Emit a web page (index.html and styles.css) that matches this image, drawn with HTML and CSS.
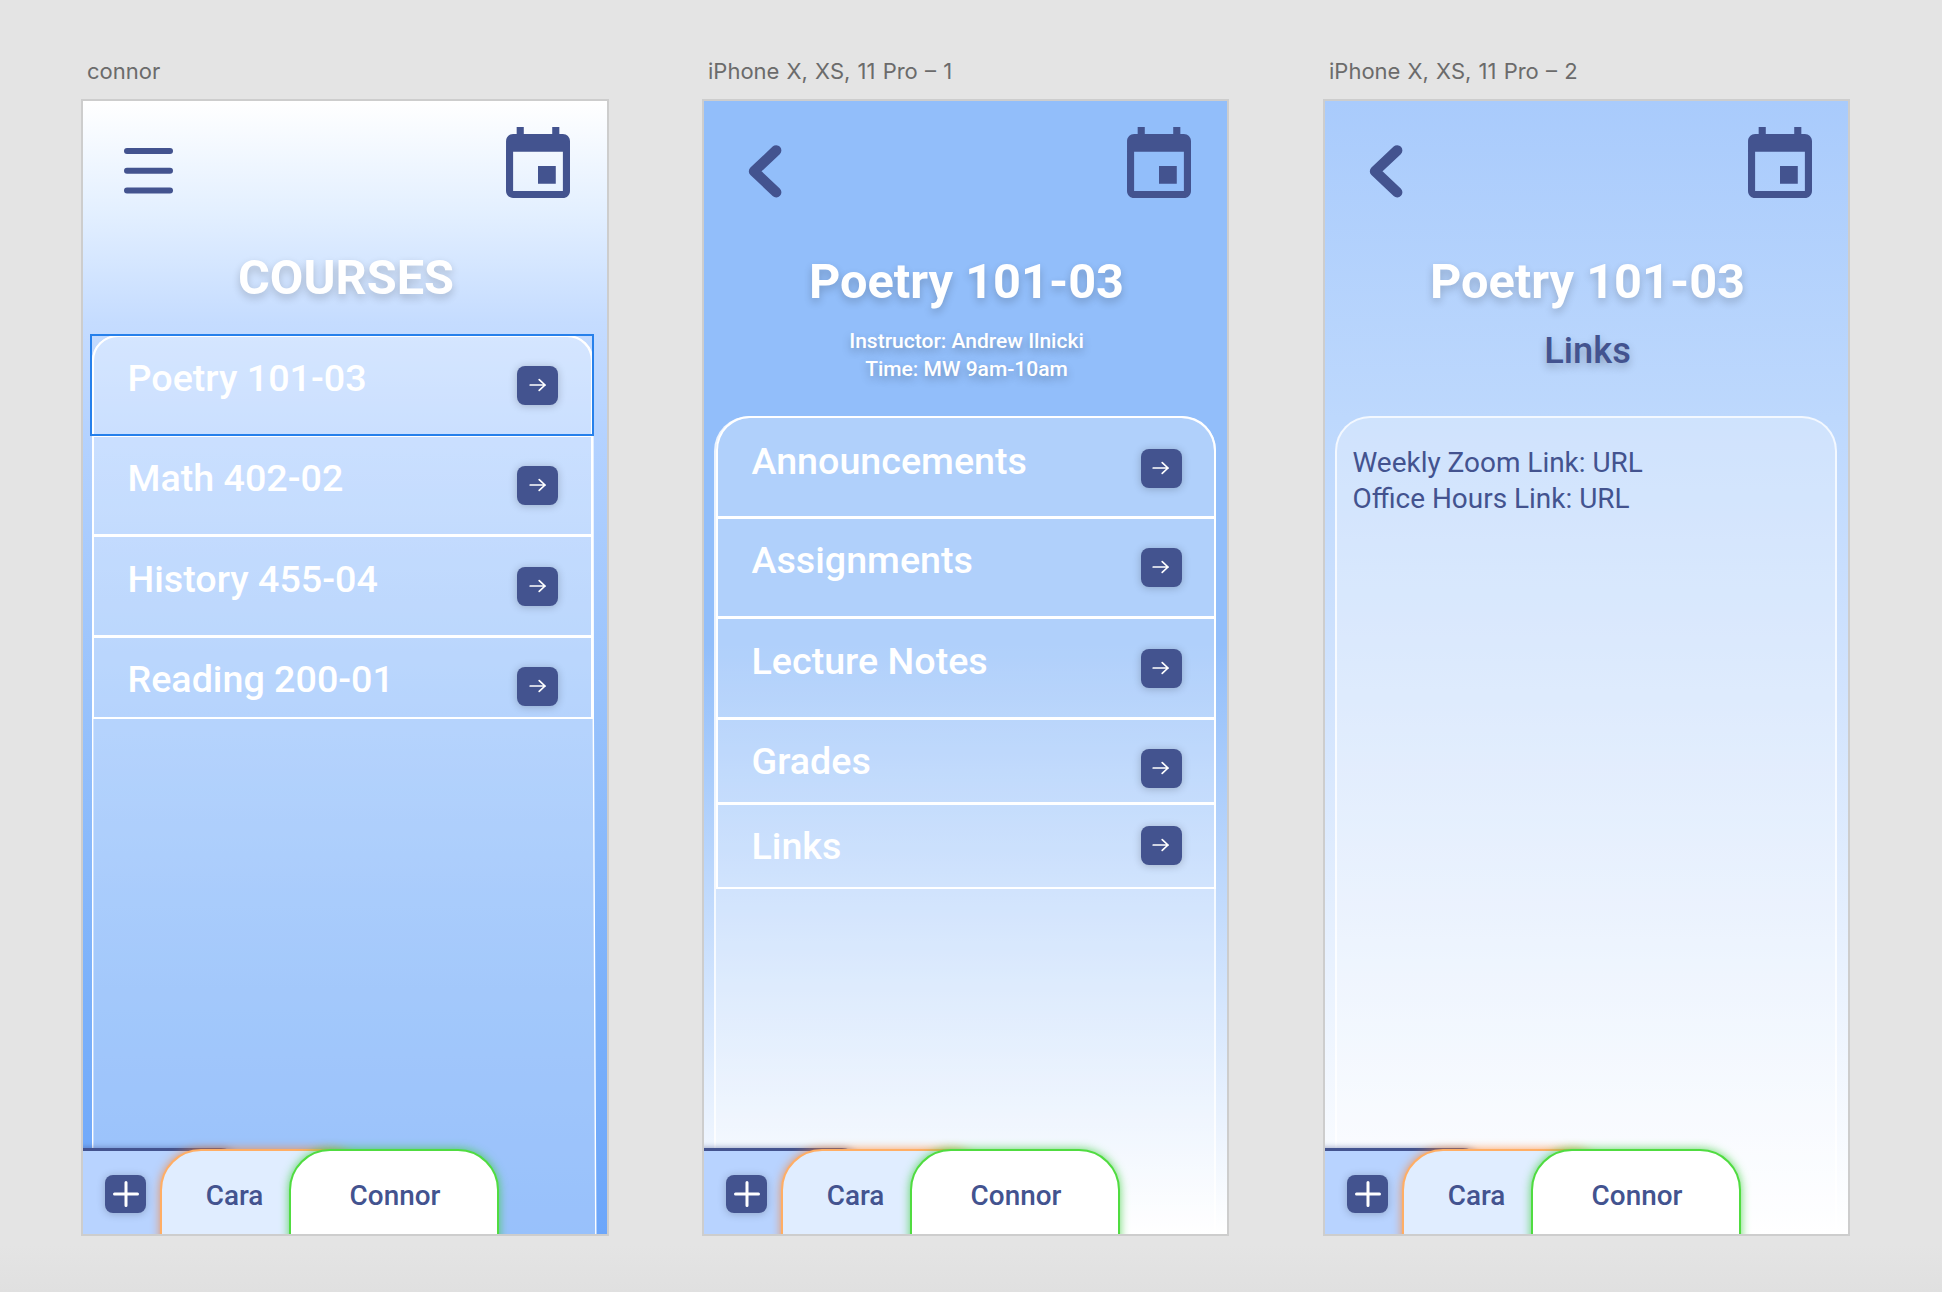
FILE: index.html
```html
<!DOCTYPE html>
<html lang="en">
<head>
<meta charset="utf-8">
<title>Course app artboards</title>
<link rel="stylesheet" href="styles.css">
</head>
<body>
<svg class="defs" aria-hidden="true">
  <symbol id="calendar" viewBox="3 1 18 20" preserveAspectRatio="none"><path fill="#43538f" d="M17 12h-5v5h5v-5zM16 1v2H8V1H6v2H5c-1.11 0-1.99.9-1.99 2L3 19c0 1.1.89 2 2 2h14c1.1 0 2-.9 2-2V5c0-1.1-.9-2-2-2h-1V1h-2zm3 18H5V8h14v11z"/></symbol>
  <symbol id="menu" viewBox="0 0 50 46"><g fill="#43538f"><rect width="49" height="6" y="0.1" rx="3"/><rect width="49" height="6" y="19.8" rx="3"/><rect width="49" height="6" y="39.4" rx="3"/></g></symbol>
  <symbol id="back" viewBox="0 0 34 53"><path d="M28.2 5.4 6 26.3l22.2 20.9" fill="none" stroke="#43538f" stroke-width="10.4" stroke-linecap="round" stroke-linejoin="round"/></symbol>
  <symbol id="arrow" viewBox="0 0 18 14"><path d="M1.2 7h15M10.2 1.6 16 7l-5.800 5.400" fill="none" stroke="#fff" stroke-width="1.700" stroke-linecap="round" stroke-linejoin="round"/></symbol>
  <symbol id="plus" viewBox="0 0 26 26"><path d="M13 1.500v23M1.500 13h23" fill="none" stroke="#fff" stroke-width="3" stroke-linecap="round"/></symbol>
</svg>

<main class="canvas">
  <section class="column">
    <h2 class="label">connor</h2>
    <div class="board board-courses">
      <header class="topbar">
        <svg class="icon-menu"><use href="#menu"/></svg>
        <svg class="icon-calendar"><use href="#calendar"/></svg>
      </header>
      <div class="hero">
        <h1 class="title">COURSES</h1>
      </div>
      <div class="panel">
        <svg class="panel-shape" viewBox="0 0 505 900"><path d="M.7 900V26A25.300 25.300 0 0 1 26 .7h449.500A25.300 25.300 0 0 1 500.800 26L501.300 383 503.800 900" fill="#fff" fill-opacity=".3" stroke="#fff" stroke-width="1.400"/></svg>
        <ul class="list">
          <li class="row row-top"><span class="name">Poetry 101-03</span><span class="go"><svg><use href="#arrow"/></svg></span><i class="selection"></i></li>
          <li class="row"><span class="name">Math 402-02</span><span class="go"><svg><use href="#arrow"/></svg></span></li>
          <li class="row"><span class="name">History 455-04</span><span class="go"><svg><use href="#arrow"/></svg></span></li>
          <li class="row row-last"><span class="name">Reading 200-01</span><span class="go"><svg><use href="#arrow"/></svg></span></li>
        </ul>
      </div>
      <nav class="tabs">
        <div class="tab tab-add"><span class="add"><svg><use href="#plus"/></svg></span></div>
        <div class="tab tab-cara">Cara</div>
        <div class="tab tab-connor">Connor</div>
      </nav>
    </div>
  </section>

  <section class="column">
    <h2 class="label">iPhone X, XS, 11 Pro – 1</h2>
    <div class="board board-detail">
      <header class="topbar">
        <svg class="icon-back"><use href="#back"/></svg>
        <svg class="icon-calendar"><use href="#calendar"/></svg>
      </header>
      <div class="hero">
        <h1 class="title">Poetry 101-03</h1>
        <p class="meta">Instructor: Andrew Ilnicki<br>Time: MW 9am-10am</p>
      </div>
      <div class="panel">
        <ul class="list">
          <li class="row row-top"><span class="name">Announcements</span><span class="go"><svg><use href="#arrow"/></svg></span></li>
          <li class="row"><span class="name">Assignments</span><span class="go"><svg><use href="#arrow"/></svg></span></li>
          <li class="row"><span class="name">Lecture Notes</span><span class="go"><svg><use href="#arrow"/></svg></span></li>
          <li class="row row-short"><span class="name">Grades</span><span class="go"><svg><use href="#arrow"/></svg></span></li>
          <li class="row row-last"><span class="name">Links</span><span class="go"><svg><use href="#arrow"/></svg></span></li>
        </ul>
      </div>
      <nav class="tabs">
        <div class="tab tab-add"><span class="add"><svg><use href="#plus"/></svg></span></div>
        <div class="tab tab-cara">Cara</div>
        <div class="tab tab-connor">Connor</div>
      </nav>
    </div>
  </section>

  <section class="column">
    <h2 class="label">iPhone X, XS, 11 Pro – 2</h2>
    <div class="board board-links">
      <header class="topbar">
        <svg class="icon-back"><use href="#back"/></svg>
        <svg class="icon-calendar"><use href="#calendar"/></svg>
      </header>
      <div class="hero">
        <h1 class="title">Poetry 101-03</h1>
        <p class="subtitle">Links</p>
      </div>
      <div class="panel">
        <p class="body">Weekly Zoom Link: URL<br>Office Hours Link: URL</p>
      </div>
      <nav class="tabs">
        <div class="tab tab-add"><span class="add"><svg><use href="#plus"/></svg></span></div>
        <div class="tab tab-cara">Cara</div>
        <div class="tab tab-connor">Connor</div>
      </nav>
    </div>
  </section>
</main>
</body>
</html>
```

FILE: styles.css
```css
* {
  box-sizing: border-box;
  margin: 0;
  padding: 0;
}

body {
  height: 1292px;
  overflow: hidden;
  background: linear-gradient(#e4e4e4 0, #e4e4e4 1245px, #e0e0e0 1292px);
  font-family: Roboto, "Liberation Sans", sans-serif;
}

.defs {
  position: absolute;
  width: 0;
  height: 0;
}

.canvas {
  display: grid;
  grid-template-columns: 621px 621px 527px;
  padding: 56px 0 0 81px;
}

.label {
  height: 43px;
  padding-left: 6px;
  font: 400 22px/31px Inter, "Noto Sans", sans-serif;
  word-spacing: 1px;
  color: #6b6b6b;
}

.board {
  position: relative;
  display: flex;
  flex-direction: column;
  width: 527px;
  height: 1137px;
  border: 2px solid #cdcdcd;
  overflow: hidden;
}

.board-courses {
  width: 528px;
  background: linear-gradient(#fff 0, #e4f0ff 9.500%, #c5dcff 19.500%, #b4d2ff 29.500%, #98c2fc 53%, #7ab0fa 80%, #6ca6fa 100%);
}

.board-detail {
  background: linear-gradient(#92befa 0, #92befa 48%, #fff 100%);
}

.board-links {
  background: linear-gradient(#a9cbfc 0, #bdd8fd 28%, #d1e3fd 52%, #fff 100%);
}

/* Header icons */
.topbar {
  display: flex;
  flex: none;
  justify-content: space-between;
  height: 130px;
  padding: 26px 37px 0 40.500px;
}

.board-detail .topbar,
.board-links .topbar {
  padding: 26px 36.500px 0 43.500px;
}

.icon-menu {
  width: 50px;
  height: 46px;
  margin-top: 21px;
}

.icon-back {
  width: 34px;
  height: 53px;
  margin-top: 18px;
}

.icon-calendar {
  width: 64px;
  height: 71px;
}

/* Headings */
.hero {
  flex: none;
  height: 185px;
  padding: 22px 0 0 2px;
  text-align: center;
  color: #fff;
}

.board-courses .hero {
  height: 104px;
  padding-top: 18px;
}

.title {
  font-weight: 700;
  font-size: 48.700px;
  line-height: 58px;
  text-shadow: 0 4px 8px rgba(0, 0, 0, .2);
}

.meta {
  margin-top: 16px;
  font-weight: 500;
  font-size: 21px;
  line-height: 28px;
  text-shadow: 0 4px 8px rgba(0, 0, 0, .25);
}

.subtitle {
  margin-top: 18.500px;
  font-weight: 500;
  font-size: 36.300px;
  line-height: 42px;
  color: #43538f;
  text-shadow: 0 4px 8px rgba(0, 0, 0, .25);
}

/* Translucent content panel */
.panel {
  position: relative;
  flex: none;
  width: 502px;
  height: 860px;
  margin-left: 10px;
  border: 2px solid rgba(255, 255, 255, .75);
  border-radius: 35px 35px 0 0;
  background: rgba(255, 255, 255, .28);
}

.board-courses .panel {
  width: 505px;
  height: 900px;
  margin-left: 9px;
  border: 0;
  border-radius: 0;
  background: none;
}

.panel-shape {
  position: absolute;
  inset: 0;
  width: 505px;
  height: 900px;
}

.body {
  padding: 26.500px 0 0 15.500px;
  font-size: 27.950px;
  line-height: 36px;
  color: #43538f;
}

.list {
  position: relative;
  width: 500.500px;
  margin: -2px 0 0 -0.500px;
  list-style: none;
}

.board-courses .list {
  width: 501px;
  margin: 0;
}

.row {
  position: relative;
  display: flex;
  justify-content: space-between;
  height: 100.500px;
  padding: 19.500px 32.500px 0 34px;
  border: 2px solid #fff;
  border-width: 0 2px 3px;
}

.row-top {
  height: 102.800px;
  padding-top: 20.500px;
  border-top-width: 2px;
  border-radius: 34px 34px 0 0;
}

.board-courses .row {
  padding-right: 33px;
  padding-left: 33.500px;
}

.board-courses .row-top {
  height: 101.500px;
  padding-top: 19px;
  border-radius: 26px 26px 0 0;
}

.row-short {
  height: 85px;
}

.row-last {
  height: 84px;
  border-bottom-width: 2px;
}

.board-courses .row-last {
  height: 81px;
}

.name {
  font-weight: 500;
  font-size: 37.650px;
  line-height: 44px;
  color: #fff;
}

.go {
  display: flex;
  align-items: center;
  justify-content: center;
  width: 41px;
  height: 39px;
  margin-top: 10px;
  border-radius: 8px;
  background: #43538f;
  box-shadow: 0 1px 8px rgba(0, 0, 0, .22);
}

.board-detail .row-last .go {
  margin-top: 1.500px;
}

.go svg {
  width: 18px;
  height: 14px;
  margin-bottom: 1px;
}

.selection {
  position: absolute;
  left: -4px;
  top: -3px;
  width: 504px;
  height: 102px;
  border: 2px solid #2680eb;
}

/* Overlapping profile tabs */
.tabs {
  position: absolute;
  left: -52px;
  top: 1048px;
  display: flex;
}

.tab {
  position: relative;
  flex: none;
  width: 210px;
  height: 110px;
  padding-top: 29px;
  border: 2px solid;
  border-radius: 41px 41px 0 0;
  font-weight: 500;
  font-size: 27.900px;
  line-height: 32px;
  text-align: center;
  color: #43538f;
}

.tab + .tab {
  margin-left: -81px;
}

.tab-add {
  margin-top: -1px;
  padding: 24px 0 0 72px;
  border-top-width: 3px;
  border-radius: 41px 20px 0 0;
  border-color: #43538f;
  background: #b8d3ff;
  box-shadow: 0 0 6px rgba(67, 83, 143, .6);
}

.tab-cara {
  padding-right: 61px;
  border-color: #ffae65;
  background: #e0edff;
  box-shadow: 0 0 10px rgba(255, 130, 40, .75);
}

.tab-connor {
  padding-left: 2px;
  border-color: #50dc40;
  background: #fff;
  box-shadow: 0 0 10px rgba(50, 205, 50, .75);
}

.add {
  display: flex;
  align-items: center;
  justify-content: center;
  width: 41px;
  height: 38px;
  border-radius: 8px;
  background: #43538f;
  box-shadow: 0 1px 8px rgba(0, 0, 0, .22);
}

.add svg {
  width: 26px;
  height: 26px;
}
```
